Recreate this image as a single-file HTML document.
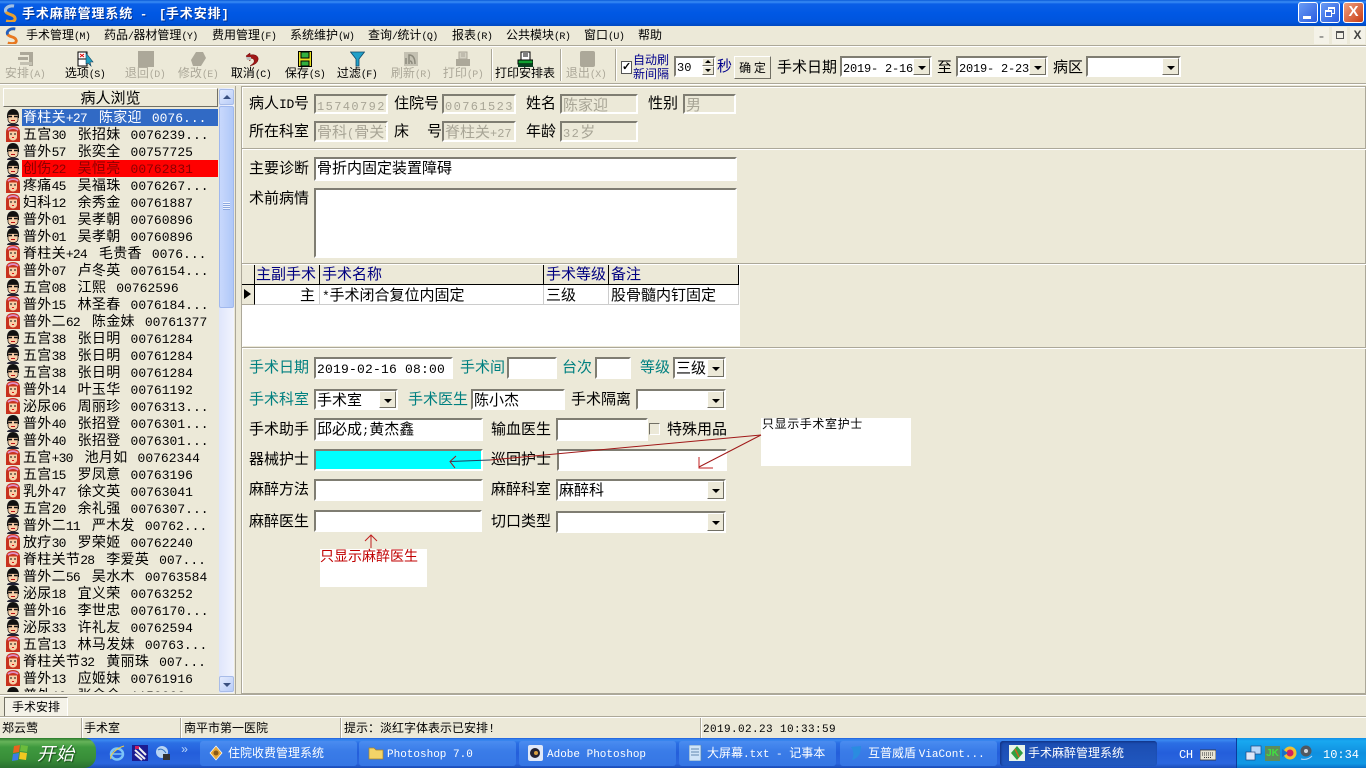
<!DOCTYPE html>
<html lang="zh"><head><meta charset="utf-8"><title>手术麻醉管理系统</title>
<style>
*{box-sizing:border-box}
html,body{margin:0;padding:0;width:1366px;height:768px;overflow:hidden;background:#ece9d8}
body{position:relative;font:15px/16px "WenQuanYi Zen Hei","Noto Sans CJK SC",sans-serif;color:#000}
i{font-style:normal;font-family:"Liberation Mono",monospace;font-size:13px;letter-spacing:-.3px}
.a,.t,.in,.sel,.tb,.btn{position:absolute}
.t{white-space:pre;line-height:16px}
.in,.sel{border:2px solid;border-color:#7f7d72 #fff #fff #7f7d72;background:#fff;line-height:17px;padding-left:1px;white-space:pre;overflow:hidden}
.in i{font-size:12px;letter-spacing:1.4px}
.dis{background:#ece9d8;color:#a8a596}
.sel:after{content:"";position:absolute;right:0;top:0;bottom:0;width:15px;background:#ece9d8;border:1px solid;border-color:#fff #716f64 #716f64 #fff}
.sel:before{content:"";position:absolute;z-index:1;right:4px;top:50%;margin-top:-1px;border:4px solid transparent;border-top:4px solid #000;border-bottom:0}
.sel i{font-size:12px;letter-spacing:-.2px}
.teal{color:#008080}
.tb{top:66px;font-size:12px;line-height:14px;text-align:center;white-space:pre;transform:translateX(-50%)}
.tb.g{color:#aca899}
.tb i{font-size:10px;letter-spacing:-.6px}
.mn{font-size:12px;top:27px}
.mn i{font-size:10px;letter-spacing:-.6px}
.ic{position:absolute}
.sep{position:absolute;top:49px;height:32px;width:2px;border-left:1px solid #aca899;border-right:1px solid #fff}
.hl{position:absolute;height:2px;border-top:1px solid #aca899;border-bottom:1px solid #fff}
#list{position:absolute;left:22px;top:109px;width:196px;height:583px;overflow:hidden;font-size:14px;letter-spacing:.3px}
#list p{margin:0;height:17px;line-height:17px;white-space:pre;position:relative;padding-left:1px;overflow:visible}
#list i{letter-spacing:-.8px;word-spacing:5px}
#list u{text-decoration:none;font-family:"Liberation Mono",monospace;font-size:13px;letter-spacing:0;word-spacing:2.2px}
.gh{position:absolute;top:265px;height:19px;line-height:18px;color:#000080;background:#ece9d8;padding-left:2px;border-right:1px solid #000;white-space:pre}
.gc{position:absolute;top:285px;height:20px;line-height:19px;padding-left:2px;white-space:pre;background:#fff;border-right:1px solid #ccc;border-bottom:1px solid #ccc}
.task{position:absolute;top:741px;height:25px;width:157px;border-radius:3px;background:linear-gradient(#4a8cf0,#3a7ce8 40%,#3576e4);color:#fff;line-height:24px;padding-left:28px;white-space:pre;font-size:12px}
.task i{font-size:11px;letter-spacing:0}
.st{position:absolute;top:719px;height:18px;line-height:18px;white-space:pre;font-size:12px}
.sv{position:absolute;top:718px;height:20px;width:2px;border-left:1px solid #aca899;border-right:1px solid #fff}
</style></head><body>

<svg width="0" height="0" style="position:absolute"><defs>
<symbol id="m" viewBox="0 0 16 17"><path d="M2 7C2 2 5 0 8 0s6 2 6 7v2H2z" fill="#111"/><path d="M3 5.500h10V11c0 2-2 3.500-5 3.500S3 13 3 11z" fill="#f7cfa8" stroke="#111" stroke-width=".7"/><path d="M3.500 7.500h3.500M9 7.500h3.500" stroke="#111" stroke-width="1.400"/><path d="M6 11.500h4" stroke="#b11" stroke-width="1"/><path d="M2 17c0-2 3-2.500 6-2.500s6 .5 6 2.500z" fill="#223"/></symbol>
<symbol id="f" viewBox="0 0 16 17"><path d="M1 16V6c0-4 3-6 7-6s7 2 7 6v10z" fill="#c8321e"/><path d="M4 5.500h8V11c0 2-2 3.500-4 3.500S4 13 4 11z" fill="#f7cfa8"/><path d="M3 4C6 1.500 10 1.500 13 4" stroke="#e090c8" stroke-width="1.800" fill="none"/><path d="M5 8h2M9 8h2" stroke="#111" stroke-width="1"/><path d="M7 11.500h2" stroke="#d11"/></symbol>
</defs></svg>

<!-- title bar -->
<div class="a" style="left:0;top:0;width:1366px;height:26px;background:linear-gradient(#0a5ad8 0,#3a8cf4 2px,#0a5ee6 4px,#0058e4 50%,#0054dc 85%,#0048c0 100%)"></div>
<svg class="ic" style="left:2px;top:4px" width="16" height="18" viewBox="0 0 16 18"><path d="M12 2C6 1 2 5 4 8s8 2 9 6-5 4-9 3" fill="none" stroke="#e8a030" stroke-width="3"/><path d="M12 2C6 1 2 5 4 8" fill="none" stroke="#9fc0e8" stroke-width="3"/></svg>
<div class="t" style="left:22px;top:5px;color:#fff;font-weight:bold;font-size:13px;letter-spacing:.9px;text-shadow:1px 1px 0 #003090">手术麻醉管理系统</div>
<div class="t" style="left:140px;top:5px;color:#fff;font-weight:bold;text-shadow:1px 1px 0 #003090"><i style="font-weight:bold;font-size:12px">-</i></div>
<div class="t" style="left:159px;top:5px;color:#fff;font-weight:bold;font-size:13px;letter-spacing:.9px;text-shadow:1px 1px 0 #003090"><i style="font-weight:bold;font-size:12px">[</i>手术安排<i style="font-weight:bold;font-size:12px">]</i></div>
<div class="a" style="left:1298px;top:2px;width:20px;height:21px;border:1px solid #fff;border-radius:3px;background:linear-gradient(135deg,#6a9cf4,#2a5ce0)"><div class="a" style="left:4px;top:13px;width:8px;height:3px;background:#fff"></div></div>
<div class="a" style="left:1320px;top:2px;width:20px;height:21px;border:1px solid #fff;border-radius:3px;background:linear-gradient(135deg,#6a9cf4,#2a5ce0)"><div class="a" style="left:7px;top:4px;width:7px;height:7px;border:1px solid #fff;border-top-width:2px"></div><div class="a" style="left:4px;top:7px;width:7px;height:7px;border:1px solid #fff;border-top-width:2px;background:#3a6ce4"></div></div>
<div class="a" style="left:1343px;top:2px;width:21px;height:21px;border:1px solid #fff;border-radius:3px;background:linear-gradient(135deg,#f0a080,#c83c14);color:#fff;text-align:center;font:bold 15px/18px 'Liberation Sans',sans-serif">X</div>

<!-- menu -->
<svg class="ic" style="left:4px;top:27px" width="15" height="17" viewBox="0 0 16 18"><path d="M12 2C6 1 2 5 4 8s8 2 9 6-5 4-9 3" fill="none" stroke="#e87820" stroke-width="3"/><path d="M12 2C6 1 2 5 4 8" fill="none" stroke="#2060c0" stroke-width="3"/></svg>
<div class="t mn" style="left:26px">手术管理<i>(M)</i></div>
<div class="t mn" style="left:104px">药品<i>/</i>器材管理<i>(Y)</i></div>
<div class="t mn" style="left:212px">费用管理<i>(F)</i></div>
<div class="t mn" style="left:290px">系统维护<i>(W)</i></div>
<div class="t mn" style="left:368px">查询<i>/</i>统计<i>(Q)</i></div>
<div class="t mn" style="left:452px">报表<i>(R)</i></div>
<div class="t mn" style="left:506px">公共模块<i>(R)</i></div>
<div class="t mn" style="left:584px">窗口<i>(U)</i></div>
<div class="t mn" style="left:638px">帮助</div>
<div class="a" style="left:1314px;top:27px;width:15px;height:17px;text-align:center;line-height:17px;color:#555;background:#f4f2e8">-</div>
<div class="a" style="left:1332px;top:27px;width:15px;height:17px;background:#f4f2e8"><div class="a" style="left:4px;top:4px;width:8px;height:8px;border:1px solid #555;border-top-width:2px"></div></div>
<div class="a" style="left:1350px;top:27px;width:15px;height:17px;text-align:center;font:bold 12px/17px 'Liberation Sans',sans-serif;color:#444;background:#f4f2e8">X</div>
<div class="hl" style="left:0;top:45px;width:1366px"></div>

<!-- toolbar icons -->
<svg class="ic" style="left:17px;top:51px" width="18" height="16"><rect x="3" y="1" width="12" height="3" fill="#aca899"/><rect x="1" y="6" width="10" height="3" fill="#aca899"/><rect x="12" y="1" width="4" height="14" fill="#aca899"/><rect x="3" y="11" width="12" height="3" fill="#c4c1b2"/></svg>
<svg class="ic" style="left:77px;top:51px" width="18" height="16"><rect x="1" y="1" width="9" height="14" fill="#fff" stroke="#000"/><path d="M1 8h9" stroke="#000"/><path d="M3 3l4 3M7 3L3 6" stroke="#d00"/><path d="M9 2l7 9-3 0 1 4-3-3-2 1z" fill="#20a0c0" stroke="#104060" stroke-width=".6"/></svg>
<div class="a" style="left:138px;top:51px;width:16px;height:16px;background:#aca899"></div>
<svg class="ic" style="left:190px;top:51px" width="17" height="16"><path d="M6 1h7l3 6-5 8H3L1 9z" fill="#aca899"/></svg>
<svg class="ic" style="left:244px;top:52px" width="16" height="15"><path d="M2 4l4-3v2c5-1 9 1 8 5-1 4-5 5-8 6 2-2 5-3 4-6-1-2-3-2-4-1v2z" fill="#a01818" stroke="#600" stroke-width=".5"/><path d="M2 5h5v3H3z" fill="#bbb"/></svg>
<svg class="ic" style="left:298px;top:51px" width="14" height="16"><rect x=".5" y=".5" width="13" height="15" fill="#e8e020" stroke="#000"/><rect x="3" y="1" width="8" height="6" fill="#30b040" stroke="#000"/><rect x="3" y="10" width="8" height="5" fill="#30b040" stroke="#000"/></svg>
<svg class="ic" style="left:350px;top:51px" width="15" height="16"><path d="M.5 1h14L9 8v7L6 15V8z" fill="#20a0c8" stroke="#104868" stroke-width=".8"/></svg>
<svg class="ic" style="left:403px;top:51px" width="16" height="16"><rect x="1" y="1" width="14" height="14" fill="#c4c1b2"/><path d="M3 13V7M6 13V4c3 0 6 2 6 9M9 13c0-2-1-3-2-3" stroke="#8c8a7c" stroke-width="1.500" fill="none"/></svg>
<svg class="ic" style="left:455px;top:51px" width="16" height="16"><rect x="4" y="1" width="8" height="7" fill="#d4d1c2" stroke="#aca899"/><path d="M6 3h4M6 5h4" stroke="#aca899"/><rect x="1" y="8" width="14" height="7" fill="#aca899"/></svg>
<svg class="ic" style="left:517px;top:51px" width="16" height="17"><rect x="4" y="1" width="9" height="8" fill="#fff" stroke="#000"/><path d="M6 3h5M6 5h5" stroke="#000"/><rect x="1" y="9" width="15" height="4" fill="#10a030" stroke="#000"/><rect x="1" y="13" width="15" height="3" fill="#084020"/></svg>
<div class="a" style="left:580px;top:51px;width:15px;height:16px;background:#aca899;border-radius:2px"></div>

<!-- toolbar labels -->
<div class="tb g" style="left:25px">安排<i>(A)</i></div>
<div class="tb" style="left:85px">选项<i>(S)</i></div>
<div class="tb g" style="left:145px">退回<i>(D)</i></div>
<div class="tb g" style="left:198px">修改<i>(E)</i></div>
<div class="tb" style="left:251px">取消<i>(C)</i></div>
<div class="tb" style="left:305px">保存<i>(S)</i></div>
<div class="tb" style="left:357px">过滤<i>(F)</i></div>
<div class="tb g" style="left:411px">刷新<i>(R)</i></div>
<div class="tb g" style="left:463px">打印<i>(P)</i></div>
<div class="tb" style="left:525px">打印安排表</div>
<div class="tb g" style="left:586px">退出<i>(X)</i></div>
<div class="sep" style="left:491px"></div><div class="sep" style="left:560px"></div><div class="sep" style="left:615px"></div>

<!-- auto refresh -->
<div class="a" style="left:621px;top:61px;width:11px;height:13px;background:#fff;border:1px solid #555;font:bold 11px/11px 'Liberation Sans',sans-serif;text-align:center">✓</div>
<div class="t" style="left:633px;top:53px;color:#00008c;font-size:12px;line-height:14px">自动刷
新间隔</div>
<div class="in" style="left:674px;top:56px;width:42px;height:21px;font-size:12px"><i style="font-size:12px;letter-spacing:0">30</i></div>
<div class="a" style="left:702px;top:58px;width:12px;height:8px;background:#ece9d8;border:1px solid;border-color:#fff #716f64 #716f64 #fff"><div class="a" style="left:2px;top:1px;border:3px solid transparent;border-bottom:3px solid #000;border-top:0"></div></div>
<div class="a" style="left:702px;top:66px;width:12px;height:9px;background:#ece9d8;border:1px solid;border-color:#fff #716f64 #716f64 #fff"><div class="a" style="left:2px;top:2px;border:3px solid transparent;border-top:3px solid #000;border-bottom:0"></div></div>
<div class="t" style="left:717px;top:58px;color:#00008c">秒</div>
<div class="a" style="left:734px;top:56px;width:37px;height:23px;background:#ece9d8;border:1px solid;border-color:#fff #716f64 #716f64 #fff;text-align:center;line-height:21px;font-size:12px;white-space:pre">确 定</div>
<div class="t" style="left:777px;top:59px">手术日期</div>
<div class="sel" style="left:840px;top:56px;width:92px;height:21px"><i>2019- 2-16</i></div>
<div class="t" style="left:937px;top:59px">至</div>
<div class="sel" style="left:956px;top:56px;width:92px;height:21px"><i>2019- 2-23</i></div>
<div class="t" style="left:1053px;top:59px">病区</div>
<div class="sel" style="left:1086px;top:56px;width:95px;height:21px"></div>
<div class="hl" style="left:0;top:83px;width:1366px"></div>

<!-- left panel -->
<div class="a" style="left:235px;top:86px;width:1px;height:608px;background:#aca899"></div>
<div class="a" style="left:3px;top:88px;width:215px;height:19px;background:#ece9d8;border:1px solid;border-color:#fff #716f64 #716f64 #fff;text-align:center;line-height:17px">病人浏览</div>
<div class="a" style="left:219px;top:88px;width:15px;height:605px;background:linear-gradient(90deg,#dfe6fb,#f2f4fe)"></div>
<div class="a" style="left:219px;top:89px;width:15px;height:16px;background:linear-gradient(135deg,#e4ebfe,#b8ccf8);border:1px solid #a8bce8;border-radius:2px"><div class="a" style="left:3px;top:5px;border:4px solid transparent;border-bottom:4px solid #3a5080;border-top:0"></div></div>
<div class="a" style="left:219px;top:106px;width:15px;height:202px;background:linear-gradient(90deg,#c8d8fc,#b0c8f8);border:1px solid #a0b8ee;border-radius:2px"><div class="a" style="left:3px;top:95px;width:7px;height:8px;background:repeating-linear-gradient(#eef3ff 0 1px,#8ca8e0 1px 2px)"></div></div>
<div class="a" style="left:219px;top:676px;width:15px;height:16px;background:linear-gradient(135deg,#e4ebfe,#b8ccf8);border:1px solid #a8bce8;border-radius:2px"><div class="a" style="left:3px;top:6px;border:4px solid transparent;border-top:4px solid #3a5080;border-bottom:0"></div></div>

<div id="list">
<p style="background:#316ac5;color:#fff">脊柱关<i>+27 </i>陈家迎<u> 0076...</u></p>
<p>五宫<i>30 </i>张招妹<u> 0076239...</u></p>
<p>普外<i>57 </i>张奕全<u> 00757725</u></p>
<p style="background:#f00;color:#8a0000">创伤<i>22 </i>吴恒亮<u> 00762831</u></p>
<p>疼痛<i>45 </i>吴福珠<u> 0076267...</u></p>
<p>妇科<i>12 </i>余秀金<u> 00761887</u></p>
<p>普外<i>01 </i>吴孝朝<u> 00760896</u></p>
<p>普外<i>01 </i>吴孝朝<u> 00760896</u></p>
<p>脊柱关<i>+24 </i>毛贵香<u> 0076...</u></p>
<p>普外<i>07 </i>卢冬英<u> 0076154...</u></p>
<p>五宫<i>08 </i>江熙<u> 00762596</u></p>
<p>普外<i>15 </i>林圣春<u> 0076184...</u></p>
<p>普外二<i>62 </i>陈金妹<u> 00761377</u></p>
<p>五宫<i>38 </i>张日明<u> 00761284</u></p>
<p>五宫<i>38 </i>张日明<u> 00761284</u></p>
<p>五宫<i>38 </i>张日明<u> 00761284</u></p>
<p>普外<i>14 </i>叶玉华<u> 00761192</u></p>
<p>泌尿<i>06 </i>周丽珍<u> 0076313...</u></p>
<p>普外<i>40 </i>张招登<u> 0076301...</u></p>
<p>普外<i>40 </i>张招登<u> 0076301...</u></p>
<p>五宫<i>+30 </i>池月如<u> 00762344</u></p>
<p>五宫<i>15 </i>罗凤意<u> 00763196</u></p>
<p>乳外<i>47 </i>徐文英<u> 00763041</u></p>
<p>五宫<i>20 </i>余礼强<u> 0076307...</u></p>
<p>普外二<i>11 </i>严木发<u> 00762...</u></p>
<p>放疗<i>30 </i>罗荣姬<u> 00762240</u></p>
<p>脊柱关节<i>28 </i>李爱英<u> 007...</u></p>
<p>普外二<i>56 </i>吴水木<u> 00763584</u></p>
<p>泌尿<i>18 </i>宜义荣<u> 00763252</u></p>
<p>普外<i>16 </i>李世忠<u> 0076170...</u></p>
<p>泌尿<i>33 </i>许礼友<u> 00762594</u></p>
<p>五宫<i>13 </i>林马发妹<u> 00763...</u></p>
<p>脊柱关节<i>32 </i>黄丽珠<u> 007...</u></p>
<p>普外<i>13 </i>应姬妹<u> 00761916</u></p>
<p>普外<i>10 </i>张金余<u> 1150000</u></p>
</div>
<svg class="ic" style="left:5px;top:109px" width="16" height="583" viewBox="0 0 16 583">
<use href="#m" y="0" width="16" height="17"/><use href="#f" y="17" width="16" height="17"/><use href="#m" y="34" width="16" height="17"/><use href="#m" y="51" width="16" height="17"/><use href="#f" y="68" width="16" height="17"/><use href="#f" y="85" width="16" height="17"/><use href="#m" y="102" width="16" height="17"/><use href="#m" y="119" width="16" height="17"/><use href="#f" y="136" width="16" height="17"/><use href="#f" y="153" width="16" height="17"/><use href="#m" y="170" width="16" height="17"/><use href="#f" y="187" width="16" height="17"/><use href="#f" y="204" width="16" height="17"/><use href="#m" y="221" width="16" height="17"/><use href="#m" y="238" width="16" height="17"/><use href="#m" y="255" width="16" height="17"/><use href="#f" y="272" width="16" height="17"/><use href="#f" y="289" width="16" height="17"/><use href="#m" y="306" width="16" height="17"/><use href="#m" y="323" width="16" height="17"/><use href="#f" y="340" width="16" height="17"/><use href="#f" y="357" width="16" height="17"/><use href="#f" y="374" width="16" height="17"/><use href="#m" y="391" width="16" height="17"/><use href="#m" y="408" width="16" height="17"/><use href="#f" y="425" width="16" height="17"/><use href="#f" y="442" width="16" height="17"/><use href="#m" y="459" width="16" height="17"/><use href="#m" y="476" width="16" height="17"/><use href="#m" y="493" width="16" height="17"/><use href="#m" y="510" width="16" height="17"/><use href="#f" y="527" width="16" height="17"/><use href="#f" y="544" width="16" height="17"/><use href="#f" y="561" width="16" height="17"/><use href="#m" y="578" width="16" height="17"/>
</svg>

<!-- right panel frame -->
<div class="a" style="left:241px;top:86px;width:1125px;height:608px;border:1px solid #aca899;box-shadow:inset 1px 1px 0 #fff"></div>

<div class="t" style="left:249px;top:95px">病人<i>ID</i>号</div>
<div class="in dis" style="left:314px;top:94px;width:74px;height:20px"><i>15740792</i></div>
<div class="t" style="left:394px;top:95px">住院号</div>
<div class="in dis" style="left:442px;top:94px;width:74px;height:20px"><i>00761523</i></div>
<div class="t" style="left:526px;top:95px">姓名</div>
<div class="in dis" style="left:560px;top:94px;width:78px;height:20px">陈家迎</div>
<div class="t" style="left:648px;top:95px">性别</div>
<div class="in dis" style="left:683px;top:94px;width:53px;height:20px">男</div>

<div class="t" style="left:249px;top:123px">所在科室</div>
<div class="in dis" style="left:314px;top:121px;width:74px;height:21px">骨科<i style="letter-spacing:0">(</i>骨关节</div>
<div class="t" style="left:394px;top:123px">床</div>
<div class="t" style="left:427px;top:123px">号</div>
<div class="in dis" style="left:442px;top:121px;width:74px;height:21px">脊柱关<i style="letter-spacing:0">+27</i></div>
<div class="t" style="left:526px;top:123px">年龄</div>
<div class="in dis" style="left:560px;top:121px;width:78px;height:21px"><i>32</i>岁</div>
<div class="hl" style="left:242px;top:148px;width:1124px"></div>

<div class="t" style="left:249px;top:160px">主要诊断</div>
<div class="in" style="left:314px;top:157px;width:423px;height:24px">骨折内固定装置障碍</div>
<div class="t" style="left:249px;top:190px">术前病情</div>
<div class="in" style="left:314px;top:188px;width:423px;height:70px"></div>
<div class="hl" style="left:242px;top:263px;width:1124px"></div>

<!-- grid -->
<div class="a" style="left:242px;top:265px;width:498px;height:81px;background:#fff"></div>
<div class="gh" style="left:242px;width:13px"></div>
<div class="gh" style="left:255px;width:65px;padding-left:1px">主副手术</div>
<div class="gh" style="left:320px;width:224px">手术名称</div>
<div class="gh" style="left:544px;width:65px">手术等级</div>
<div class="gh" style="left:609px;width:130px">备注</div>
<div class="a" style="left:242px;top:284px;width:497px;height:1px;background:#000"></div>
<div class="gc" style="left:242px;width:13px;background:#ece9d8;border-right:1px solid #000;border-bottom:1px solid #aca899"><div class="a" style="left:2px;top:4px;border:5px solid transparent;border-left:7px solid #000;border-right:0"></div></div>
<div class="gc" style="left:255px;width:65px;text-align:right;padding-right:4px">主</div>
<div class="gc" style="left:320px;width:224px"><i>*</i>手术闭合复位内固定</div>
<div class="gc" style="left:544px;width:65px">三级</div>
<div class="gc" style="left:609px;width:130px">股骨髓内钉固定</div>
<div class="hl" style="left:242px;top:347px;width:1124px"></div>

<!-- form -->
<div class="t teal" style="left:249px;top:359px">手术日期</div>
<div class="in" style="left:314px;top:357px;width:139px;height:22px;line-height:18px"><i style="font-size:13px;letter-spacing:.2px">2019-02-16 08:00</i></div>
<div class="t teal" style="left:460px;top:359px">手术间</div>
<div class="in" style="left:507px;top:357px;width:50px;height:22px"></div>
<div class="t teal" style="left:562px;top:359px">台次</div>
<div class="in" style="left:595px;top:357px;width:36px;height:22px"></div>
<div class="t teal" style="left:640px;top:359px">等级</div>
<div class="sel" style="left:673px;top:357px;width:53px;height:22px">三级</div>

<div class="t teal" style="left:249px;top:391px">手术科室</div>
<div class="sel" style="left:314px;top:389px;width:84px;height:21px">手术室</div>
<div class="t teal" style="left:408px;top:391px">手术医生</div>
<div class="in" style="left:471px;top:389px;width:94px;height:21px">陈小杰</div>
<div class="t" style="left:571px;top:391px">手术隔离</div>
<div class="sel" style="left:636px;top:389px;width:90px;height:21px"></div>

<div class="t" style="left:249px;top:421px">手术助手</div>
<div class="in" style="left:314px;top:418px;width:169px;height:23px">邱必成<i style="letter-spacing:0">;</i>黄杰鑫</div>
<div class="t" style="left:491px;top:421px">输血医生</div>
<div class="in" style="left:556px;top:418px;width:92px;height:23px"></div>
<div class="a" style="left:649px;top:423px;width:11px;height:12px;border:1px solid;border-color:#716f64 #fff #fff #716f64"></div>
<div class="t" style="left:667px;top:421px">特殊用品</div>

<div class="t" style="left:249px;top:451px">器械护士</div>
<div class="in" style="left:314px;top:449px;width:169px;height:22px;background:#0ff"></div>
<div class="t" style="left:491px;top:451px">巡回护士</div>
<div class="in" style="left:557px;top:449px;width:170px;height:22px"></div>

<div class="t" style="left:249px;top:481px">麻醉方法</div>
<div class="in" style="left:314px;top:479px;width:169px;height:22px"></div>
<div class="t" style="left:491px;top:481px">麻醉科室</div>
<div class="sel" style="left:556px;top:479px;width:170px;height:22px">麻醉科</div>

<div class="t" style="left:249px;top:513px">麻醉医生</div>
<div class="in" style="left:314px;top:510px;width:168px;height:22px"></div>
<div class="t" style="left:491px;top:513px">切口类型</div>
<div class="sel" style="left:556px;top:511px;width:170px;height:22px"></div>

<!-- annotations -->
<div class="a" style="left:761px;top:418px;width:150px;height:48px;background:#fff"></div>
<div class="t" style="left:762px;top:416px;font-size:12px;letter-spacing:.6px">只显示手术室护士</div>
<div class="a" style="left:320px;top:549px;width:107px;height:38px;background:#fff"></div>
<div class="t" style="left:320px;top:548px;color:#c00000;font-size:14px">只显示麻醉医生</div>
<svg class="ic" style="left:0;top:0" width="1366" height="768" fill="none">
<path d="M761 435L490 460" stroke="#a01818"/><path d="M490 460L450 461.500" stroke="#204060"/>
<path d="M456 456L450 461.500 455 468" stroke="#a01818"/>
<path d="M761 435L699 467" stroke="#a01818"/><path d="M699 457V468H713" stroke="#c02020"/>
<path d="M371 535V548M365 541L371 535 377 541" stroke="#c02020"/>
</svg>

<!-- tab bar -->
<div class="hl" style="left:0;top:694px;width:1366px"></div>
<div class="a" style="left:4px;top:697px;width:64px;height:20px;border:1px solid;border-color:#716f64 #fff #fff #716f64;font-size:12px;line-height:18px;text-align:center;background:#f4f2e8">手术安排</div>
<div class="hl" style="left:0;top:716px;width:1366px"></div>

<!-- status -->
<div class="st" style="left:2px">郑云莺</div><div class="sv" style="left:81px"></div>
<div class="st" style="left:84px">手术室</div><div class="sv" style="left:180px"></div>
<div class="st" style="left:184px">南平市第一医院</div><div class="sv" style="left:340px"></div>
<div class="st" style="left:344px">提示：淡红字体表示已安排<i style="font-size:12px">!</i></div><div class="sv" style="left:700px"></div>
<div class="st" style="left:703px"><i style="font-size:11px;letter-spacing:.4px">2019.02.23 10:33:59</i></div>

<!-- taskbar -->
<div class="a" style="left:0;top:738px;width:1366px;height:30px;background:linear-gradient(#1f5fdc 0,#3b8af0 2px,#2b6fe4 5px,#245edb 50%,#2a66de 85%,#1a4cb8 100%)"></div>
<div class="a" style="left:0;top:738px;width:96px;height:30px;border-radius:0 12px 12px 0;background:linear-gradient(#2a7a2a 0,#66b35a 12%,#3f9a3f 30%,#388e38 70%,#2a7030 100%)"></div>
<svg class="ic" style="left:11px;top:744px" width="18" height="18"><path d="M3 2l6-1-1 7-6 1z" fill="#e8641e"/><path d="M10 1l7 1-1 6-7-1z" fill="#6cbc3c"/><path d="M2 10l6-1-1 7-6 1z" fill="#3a7ce8"/><path d="M9 8l7 1-1 7-7-1z" fill="#f0c820"/></svg>
<div class="t" style="left:37px;top:743px;color:#fff;font-style:italic;font-size:18px;line-height:20px;letter-spacing:1px;text-shadow:1px 1px 1px #1a4a1a">开始</div>
<svg class="ic" style="left:109px;top:745px" width="16" height="16" fill="none"><ellipse cx="8" cy="9" rx="6" ry="5.500" stroke="#7cc4f8" stroke-width="2.500"/><path d="M3 9h10" stroke="#7cc4f8" stroke-width="1.500"/><path d="M2 14C0 10 8 3 15 1" stroke="#f4d040"/></svg>
<svg class="ic" style="left:132px;top:745px" width="16" height="16"><rect width="16" height="16" fill="#1c1c90"/><path d="M3 5l10 9M3 9l7 6M6 2l8 8" stroke="#f0f0f0" stroke-width="2"/><rect x="3" y="1" width="4" height="3" fill="#d02060"/></svg>
<svg class="ic" style="left:155px;top:745px" width="16" height="16"><circle cx="7" cy="7" r="6" fill="#b8d4f4"/><path d="M3 5c3-2 6 0 8 3" stroke="#3070c0" fill="none"/><rect x="8" y="9" width="7" height="6" fill="#333"/></svg>
<div class="t" style="left:181px;top:741px;color:#b8d4f8;font-size:12px"><i style="font-size:12px">»</i></div>

<div class="task" style="left:200px">住院收费管理系统</div>
<svg class="ic" style="left:208px;top:745px" width="16" height="16"><path d="M8 1l6 7-6 7-6-7z" fill="#e8a838" stroke="#fff" stroke-width=".7"/><circle cx="8" cy="8" r="2.500" fill="#8a5a18"/></svg>
<div class="task" style="left:359px"><i>Photoshop 7.0</i></div>
<svg class="ic" style="left:368px;top:746px" width="16" height="14"><path d="M1 2h5l2 2h7v9H1z" fill="#f4d468" stroke="#a88428" stroke-width=".7"/></svg>
<div class="task" style="left:519px"><i>Adobe Photoshop</i></div>
<svg class="ic" style="left:528px;top:745px" width="15" height="16"><rect width="15" height="16" rx="2" fill="#dfe8f8"/><circle cx="7" cy="8" r="5" fill="#223"/><circle cx="8" cy="8" r="2" fill="#d8a040"/></svg>
<div class="task" style="left:679px">大屏幕<i>.txt - </i>记事本</div>
<svg class="ic" style="left:689px;top:745px" width="13" height="16"><rect width="12" height="16" fill="#cfe4f8" stroke="#5080b0" stroke-width=".7"/><path d="M2 4h8M2 7h8M2 10h8" stroke="#6088b0"/></svg>
<div class="task" style="left:840px">互普威盾 <i>ViaCont...</i></div>
<svg class="ic" style="left:849px;top:745px" width="14" height="16"><path d="M2 2l10-1c0 8-3 12-9 14 2-4 2-9-1-13z" fill="#2a8ce0"/></svg>
<div class="task" style="left:1000px;background:linear-gradient(#1a4cb0,#1e52b8 50%,#2058c0);box-shadow:inset 1px 1px 2px #103080">手术麻醉管理系统</div>
<svg class="ic" style="left:1009px;top:745px" width="16" height="16"><rect width="16" height="16" fill="#e8f4e8"/><path d="M8 1l6 7-6 7-6-7z" fill="#30a040"/><path d="M6 4l4 8" stroke="#d06020" stroke-width="1.500"/></svg>
<div class="t" style="left:1179px;top:745px;color:#fff"><i style="font-size:12px">CH</i></div>
<svg class="ic" style="left:1200px;top:748px" width="16" height="13"><rect y="2" width="16" height="10" fill="#e8e4d4" stroke="#333" stroke-width=".8"/><path d="M2 5h12M2 7h12M4 9.500h8" stroke="#333" stroke-dasharray="1 1"/></svg>

<div class="a" style="left:1236px;top:738px;width:130px;height:30px;background:linear-gradient(#1290e8 0,#18a8f0 3px,#1090e0 50%,#1098e4 85%,#0a70c8 100%);border-left:1px solid #0a3c9c"></div>
<svg class="ic" style="left:1245px;top:745px" width="17" height="17"><rect x="6" y="1" width="10" height="8" fill="#b8d8f8" stroke="#204880" stroke-width=".7"/><rect x="1" y="7" width="9" height="8" fill="#dfe8f8" stroke="#204880" stroke-width=".7"/></svg>
<div class="a" style="left:1265px;top:746px;width:15px;height:15px;background:#5c8c5c;color:#40e040;font:bold 10px/15px 'Liberation Sans',sans-serif;text-align:center">JK</div>
<svg class="ic" style="left:1282px;top:745px" width="16" height="16"><circle cx="8" cy="8" r="6.500" fill="#f0c030"/><circle cx="8" cy="8" r="3.500" fill="#d02060"/><path d="M0 4l6 4-6 4z" fill="#1870c8"/></svg>
<svg class="ic" style="left:1299px;top:745px" width="15" height="16"><circle cx="7" cy="6" r="5.500" fill="#505860"/><circle cx="7" cy="6" r="2" fill="#d0d8e0"/><path d="M2 14c4 1 8 0 11-3" stroke="#b8d8f8" fill="none"/></svg>
<div class="t" style="left:1323px;top:745px;color:#fff"><i style="font-size:12px;letter-spacing:0">10:34</i></div>
</body></html>
